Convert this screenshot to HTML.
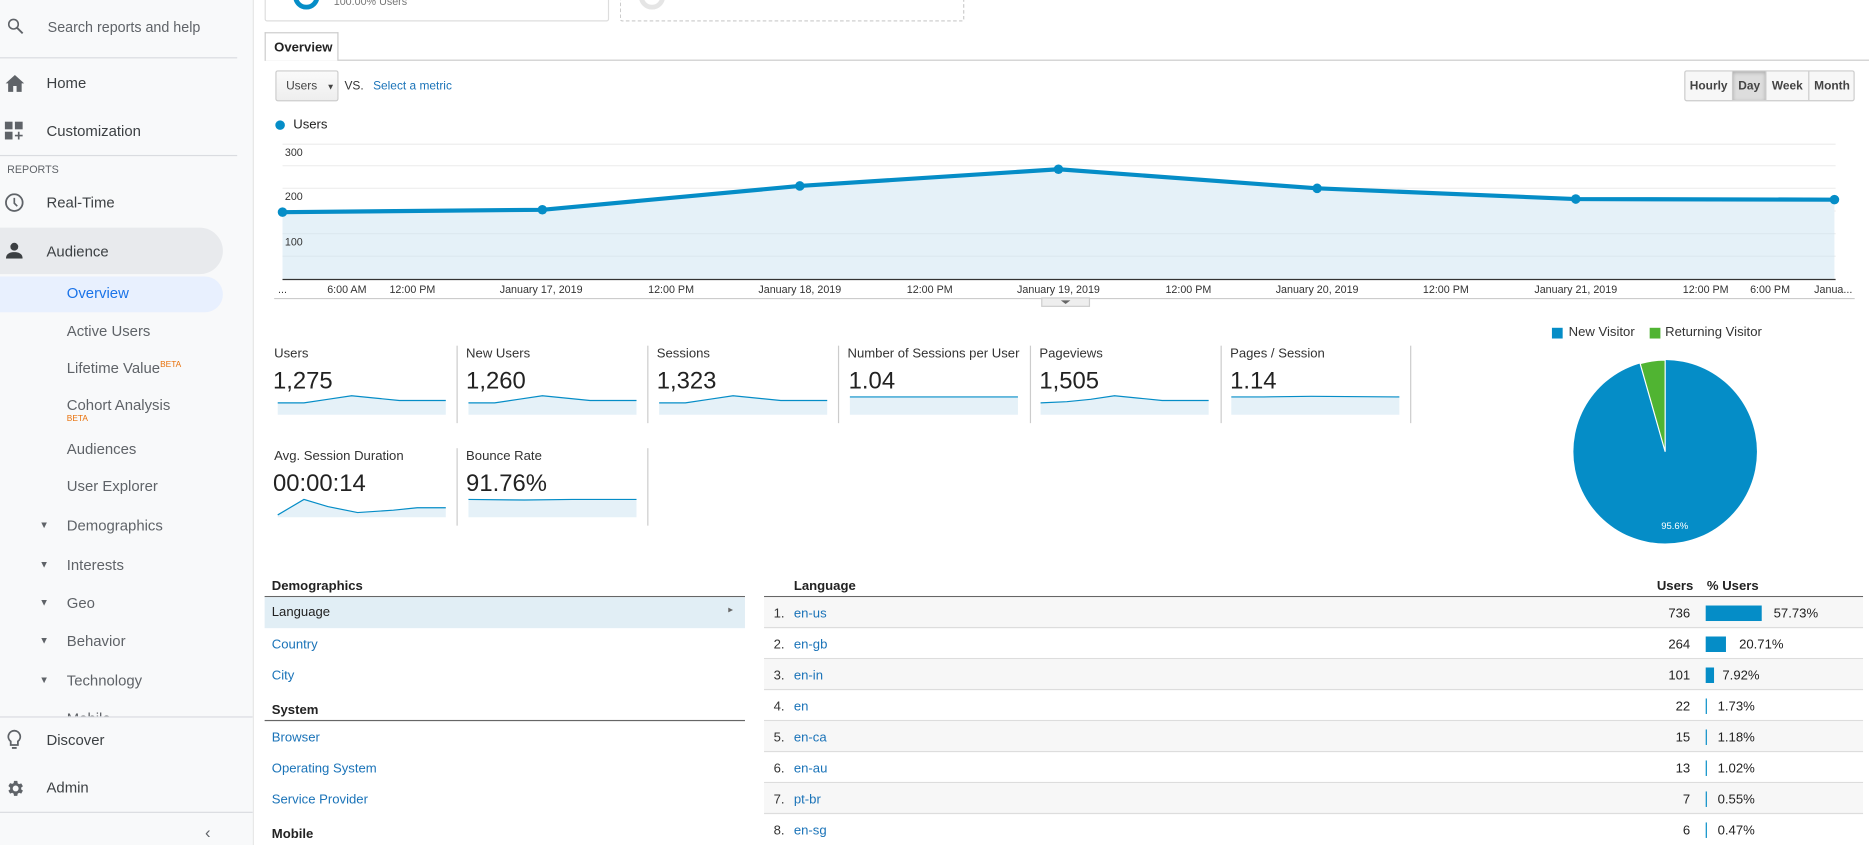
<!DOCTYPE html>
<html><head><meta charset="utf-8"><style>
*{box-sizing:border-box;margin:0;padding:0}
html,body{width:1869px;height:845px;overflow:hidden;background:#fff;font-family:"Liberation Sans",Arial,sans-serif}
#w{position:absolute;left:0;top:0;width:1568px;height:709px;transform:scale(1.19196);transform-origin:0 0;overflow:hidden}
.a{position:absolute;white-space:nowrap}
#sb{position:absolute;left:0;top:0;width:213px;height:709px;background:#f8f9fa;border-right:1px solid #e6e6e6;overflow:hidden}
.sbt{position:absolute;font-size:12.5px;color:#3c4043}
.sub{position:absolute;left:56px;font-size:12.5px;color:#5f6368}
.hr{position:absolute;left:0;width:199px;height:1px;background:#dadce0}
.lbl{font-size:11px;color:#333}
.val{font-size:20px;color:#222}
.sep{position:absolute;width:1px;background:#ccc}
.lnk{color:#1a73b8}
.row{position:absolute;left:641px;width:922px;height:26px;border-bottom:1px solid #ddd;font-size:11px}
.row span{position:absolute;top:8px}
</style></head><body><div id="w">
<div id="sb">
 <svg class="a" style="left:5px;top:14px" width="16" height="16" viewBox="0 0 24 24"><circle cx="9.5" cy="9.5" r="6" fill="none" stroke="#5f6368" stroke-width="2"/><path d="M14 14l7 7" stroke="#5f6368" stroke-width="2.4"/></svg>
 <div class="sbt" style="left:40px;top:16px;font-size:12px;color:#5f6368">Search reports and help</div>
 <div class="hr" style="top:48px"></div>
 <svg class="a" style="left:4px;top:62px" width="17" height="16" viewBox="0 0 24 22"><path d="M12 1L1 11h3v10h6v-7h4v7h6V11h3z" fill="#5f6368"/></svg>
 <div class="sbt" style="left:39px;top:63px">Home</div>
 <svg class="a" style="left:4px;top:102px" width="16" height="16" viewBox="0 0 16 16"><rect x="0" y="0" width="6.5" height="6.5" fill="#5f6368"/><rect x="8.5" y="0" width="6.5" height="6.5" fill="#5f6368"/><rect x="0" y="8.5" width="6.5" height="6.5" fill="#5f6368"/><path d="M11.7 8.5v6.5M8.5 11.7h6.5" stroke="#5f6368" stroke-width="1.4"/></svg>
 <div class="sbt" style="left:39px;top:103px">Customization</div>
 <div class="hr" style="top:130px"></div>
 <div class="a" style="left:6px;top:137px;font-size:9px;color:#5f6368">REPORTS</div>
 <svg class="a" style="left:4px;top:162px" width="16" height="16" viewBox="0 0 16 16"><circle cx="8" cy="8" r="7" fill="none" stroke="#5f6368" stroke-width="1.5"/><path d="M8 4v4.5l2.5 2.5" fill="none" stroke="#5f6368" stroke-width="1.4"/></svg>
 <div class="sbt" style="left:39px;top:163px">Real-Time</div>
 <div class="a" style="left:0;top:191px;width:187px;height:39px;background:#e8eaed;border-radius:0 20px 20px 0"></div>
 <svg class="a" style="left:5px;top:203px" width="14" height="14" viewBox="0 0 14 14"><circle cx="7" cy="4" r="3.3" fill="#3c4043"/><path d="M0 14c0-4 3-5.5 7-5.5s7 1.5 7 5.5z" fill="#3c4043"/></svg>
 <div class="sbt" style="left:39px;top:204px">Audience</div>
 <div class="a" style="left:0;top:232px;width:187px;height:30px;background:#e8f0fe;border-radius:0 15px 15px 0"></div>
 <div class="sub" style="top:239px;color:#1a73e8">Overview</div>
 <div class="sub" style="top:271px">Active Users</div>
 <div class="sub" style="top:302px">Lifetime Value<sup style="font-size:7px;color:#e8710a">BETA</sup></div>
 <div class="sub" style="top:333px">Cohort Analysis</div>
 <div class="a" style="left:56px;top:348px;font-size:7px;color:#e8710a">BETA</div>
 <div class="sub" style="top:370px">Audiences</div>
 <div class="sub" style="top:401px">User Explorer</div>
 <div class="sub" style="left:33px;top:436px;font-size:8px">▼</div><div class="sub" style="top:434px">Demographics</div>
 <div class="sub" style="left:33px;top:469px;font-size:8px">▼</div><div class="sub" style="top:467px">Interests</div>
 <div class="sub" style="left:33px;top:501px;font-size:8px">▼</div><div class="sub" style="top:499px">Geo</div>
 <div class="sub" style="left:33px;top:533px;font-size:8px">▼</div><div class="sub" style="top:531px">Behavior</div>
 <div class="sub" style="left:33px;top:566px;font-size:8px">▼</div><div class="sub" style="top:564px">Technology</div>
 <div class="sub" style="top:596px">Mobile</div>
 <div class="a" style="left:0;top:601px;width:213px;height:108px;background:#f8f9fa"></div>
 <div class="hr" style="top:601px;width:213px"></div>
 <svg class="a" style="left:6px;top:612px" width="12" height="17" viewBox="0 0 12 17"><path d="M6 1a5 5 0 0 0-3 9v3h6v-3a5 5 0 0 0-3-9z" fill="none" stroke="#5f6368" stroke-width="1.5"/><path d="M4 15.5h4" stroke="#5f6368" stroke-width="1.5"/></svg>
 <div class="sbt" style="left:39px;top:614px">Discover</div>
 <svg class="a" style="left:4px;top:653px" width="17" height="17" viewBox="0 0 24 24"><path d="M19.4 13a7.5 7.5 0 0 0 0-2l2.1-1.6-2-3.5-2.5 1a7 7 0 0 0-1.7-1L14.9 3h-4l-.4 2.6a7 7 0 0 0-1.7 1l-2.5-1-2 3.5L6.4 11a7.5 7.5 0 0 0 0 2l-2.1 1.6 2 3.5 2.5-1a7 7 0 0 0 1.7 1l.4 2.6h4l.4-2.6a7 7 0 0 0 1.7-1l2.5 1 2-3.5zM12.9 15.5a3.5 3.5 0 1 1 0-7 3.5 3.5 0 0 1 0 7z" fill="#5f6368"/></svg>
 <div class="sbt" style="left:39px;top:654px">Admin</div>
 <div class="hr" style="top:681px;width:213px"></div>
 <div class="a" style="left:172px;top:690px;font-size:14px;color:#5f6368">‹</div>
</div>

<div class="a" style="left:222px;top:-10px;width:289px;height:28px;border:1px solid #ddd;border-radius:2px"></div>
<div class="a" style="left:246px;top:-14px;width:22px;height:22px;border:4px solid #058dc7;border-radius:50%"></div>
<div class="a" style="left:280px;top:-4px;font-size:9px;color:#777">100.00% Users</div>
<div class="a" style="left:520px;top:-10px;width:289px;height:28px;border:1px dashed #ccc;border-radius:2px"></div>
<div class="a" style="left:536px;top:-14px;width:22px;height:22px;border:4px solid #e5e5e5;border-radius:50%"></div>

<div class="a" style="left:222px;top:50px;width:1346px;height:1px;background:#ccc"></div>
<div class="a" style="left:222px;top:27px;width:62px;height:24px;border:1px solid #ccc;border-bottom:none;background:#fff;font-size:11px;font-weight:bold;color:#222;padding:6px 0 0 7px">Overview</div>

<div class="a" style="left:231px;top:59px;width:53px;height:26px;border:1px solid #ccc;border-radius:2px;background:linear-gradient(#fafafa,#eee);font-size:10px;color:#444;padding:7px 0 0 8px">Users <span style="font-size:7px;margin-left:5px">▼</span></div>
<div class="a" style="left:289px;top:67px;font-size:10px;color:#333">VS.</div>
<div class="a lnk" style="left:313px;top:67px;font-size:10px">Select a metric</div>

<div class="a" style="left:1413px;top:59px;width:143px;height:26px;border:1px solid #ccc;border-radius:2px;background:#f7f7f7;font-size:10px;font-weight:bold;color:#444">
 <span class="a" style="left:0;top:0;width:40px;height:24px;padding-top:7px;text-align:center;border-right:1px solid #ccc">Hourly</span>
 <span class="a" style="left:40px;top:0;width:28px;height:24px;padding-top:7px;text-align:center;background:#ddd;border-right:1px solid #ccc;box-shadow:inset 0 1px 3px #aaa">Day</span>
 <span class="a" style="left:68px;top:0;width:36px;height:24px;padding-top:7px;text-align:center;border-right:1px solid #ccc">Week</span>
 <span class="a" style="left:104px;top:0;width:38px;height:24px;padding-top:7px;text-align:center">Month</span>
</div>

<div class="a" style="left:231px;top:101px;width:8px;height:8px;border-radius:50%;background:#058dc7"></div>
<div class="a" style="left:246px;top:99px;font-size:11px;color:#222">Users</div>

<svg class="a" style="left:0;top:0" width="1568" height="260">
 <g stroke="#eee" stroke-width="1"><line x1="237" y1="121" x2="1540" y2="121"/><line x1="237" y1="139" x2="1540" y2="139"/><line x1="237" y1="158" x2="1540" y2="158"/><line x1="237" y1="177" x2="1540" y2="177"/><line x1="237" y1="196" x2="1540" y2="196"/><line x1="237" y1="215" x2="1540" y2="215"/></g>
 <path d="M237 178L455 176L671 156L888 142L1105 158L1322 167L1539 167.5L1539 234L237 234Z" fill="#e5f1f8"/>
 <g stroke="#dde9f0"><line x1="237" y1="196" x2="1539" y2="196"/><line x1="237" y1="215" x2="1539" y2="215"/></g>
 <path d="M237 178L455 176L671 156L888 142L1105 158L1322 167L1539 167.5" fill="none" stroke="#058dc7" stroke-width="3.5"/>
 <g fill="#058dc7"><circle cx="237" cy="178" r="4"/><circle cx="455" cy="176" r="4"/><circle cx="671" cy="156" r="4"/><circle cx="888" cy="142" r="4"/><circle cx="1105" cy="158" r="4"/><circle cx="1322" cy="167" r="4"/><circle cx="1539" cy="167.5" r="4"/></g>
 <line x1="237" y1="234.5" x2="1540" y2="234.5" stroke="#333" stroke-width="1"/>
 <line x1="230" y1="250.5" x2="1556" y2="250.5" stroke="#ccc"/>
 <rect x="874" y="250" width="40" height="7" fill="#eee" stroke="#ccc"/>
 <path d="M890 252h8l-4 3z" fill="#666"/>
 <g font-family="Liberation Sans,Arial" font-size="9" fill="#333">
  <text x="239" y="131">300</text><text x="239" y="168">200</text><text x="239" y="206">100</text>
 </g>
 <g font-family="Liberation Sans,Arial" font-size="9" fill="#333" text-anchor="middle">
  <text x="237" y="246">...</text><text x="291" y="246">6:00 AM</text><text x="346" y="246">12:00 PM</text><text x="454" y="246">January 17, 2019</text><text x="563" y="246">12:00 PM</text><text x="671" y="246">January 18, 2019</text><text x="780" y="246">12:00 PM</text><text x="888" y="246">January 19, 2019</text><text x="997" y="246">12:00 PM</text><text x="1105" y="246">January 20, 2019</text><text x="1213" y="246">12:00 PM</text><text x="1322" y="246">January 21, 2019</text><text x="1431" y="246">12:00 PM</text><text x="1485" y="246">6:00 PM</text><text x="1538" y="246">Janua...</text>
 </g>
</svg>

<div class="sep" style="left:383px;top:290px;height:65px"></div><div class="sep" style="left:543px;top:290px;height:65px"></div><div class="sep" style="left:703px;top:290px;height:65px"></div><div class="sep" style="left:864px;top:290px;height:65px"></div><div class="sep" style="left:1024px;top:290px;height:65px"></div><div class="sep" style="left:1183px;top:290px;height:65px"></div>
<div class="sep" style="left:383px;top:376px;height:65px"></div><div class="sep" style="left:543px;top:376px;height:65px"></div>

<div class="a lbl" style="left:230px;top:291px">Users</div><div class="a val" style="left:229px;top:309px">1,275</div>
<div class="a lbl" style="left:391px;top:291px">New Users</div><div class="a val" style="left:391px;top:309px">1,260</div>
<div class="a lbl" style="left:551px;top:291px">Sessions</div><div class="a val" style="left:551px;top:309px">1,323</div>
<div class="a lbl" style="left:711px;top:291px">Number of Sessions per User</div><div class="a val" style="left:712px;top:309px">1.04</div>
<div class="a lbl" style="left:872px;top:291px">Pageviews</div><div class="a val" style="left:872px;top:309px">1,505</div>
<div class="a lbl" style="left:1032px;top:291px">Pages / Session</div><div class="a val" style="left:1032px;top:309px">1.14</div>
<div class="a lbl" style="left:230px;top:377px">Avg. Session Duration</div><div class="a val" style="left:229px;top:395px">00:00:14</div>
<div class="a lbl" style="left:391px;top:377px">Bounce Rate</div><div class="a val" style="left:391px;top:395px">91.76%</div>

<svg class="a" style="left:0;top:0" width="1200" height="450">
 <g fill="#e5f1f8" stroke="none">
  <path d="M233 338L255 338L275 335L295 332L315 334L335 336L374 336V348H233Z"/>
  <path d="M393 338L415 338L435 335L455 332L475 334L495 336L534 336V348H393Z"/>
  <path d="M553 338L575 338L595 335L615 332L635 334L655 336L694 336V348H553Z"/>
  <path d="M713 333L854 333V348H713Z"/>
  <path d="M873 338L895 337L915 335L935 332L955 334L975 336L1014 336V348H873Z"/>
  <path d="M1033 333L1060 333L1100 332.5L1174 333V348H1033Z"/>
  <path d="M233 432L255 419L275 425L300 430L330 428L350 426L374 426V434H233Z"/>
  <path d="M393 419L440 419.5L480 419L534 419V434H393Z"/>
 </g>
 <g fill="none" stroke="#058dc7" stroke-width="1">
  <path d="M233 338L255 338L275 335L295 332L315 334L335 336L374 336"/>
  <path d="M393 338L415 338L435 335L455 332L475 334L495 336L534 336"/>
  <path d="M553 338L575 338L595 335L615 332L635 334L655 336L694 336"/>
  <path d="M713 333L854 333"/>
  <path d="M873 338L895 337L915 335L935 332L955 334L975 336L1014 336"/>
  <path d="M1033 333L1060 333L1100 332.5L1174 333"/>
  <path d="M233 432L255 419L275 425L300 430L330 428L350 426L374 426"/>
  <path d="M393 419L440 419.5L480 419L534 419"/>
 </g>
</svg>

<div class="a" style="left:1302px;top:275px;width:9px;height:9px;background:#058dc7"></div>
<div class="a" style="left:1316px;top:273px;font-size:11px;color:#333">New Visitor</div>
<div class="a" style="left:1384px;top:275px;width:9px;height:9px;background:#50b432"></div>
<div class="a" style="left:1397px;top:273px;font-size:11px;color:#333">Returning Visitor</div>
<svg class="a" style="left:1318px;top:300px" width="160" height="160">
 <circle cx="79" cy="79" r="77" fill="#058dc7"/>
 <path d="M79 79L79 2A77 77 0 0 0 58 5Z" fill="#50b432" stroke="#fff" stroke-width="1"/>
 <text x="87" y="144" font-family="Liberation Sans,Arial" font-size="8" fill="#fff" text-anchor="middle">95.6%</text>
</svg>

<div class="a" style="left:228px;top:486px;font-size:11px;font-weight:bold;color:#222">Demographics</div>
<div class="a" style="left:222px;top:500px;width:403px;height:1px;background:#666"></div>
<div class="a" style="left:222px;top:501px;width:403px;height:26px;background:#e1eef5"></div>
<div class="a" style="left:228px;top:508px;font-size:11px;color:#222">Language</div>
<div class="a" style="left:611px;top:507px;font-size:8px;color:#666">▸</div>
<div class="a lnk" style="left:228px;top:535px;font-size:11px">Country</div>
<div class="a lnk" style="left:228px;top:561px;font-size:11px">City</div>
<div class="a" style="left:228px;top:590px;font-size:11px;font-weight:bold;color:#222">System</div>
<div class="a" style="left:222px;top:604px;width:403px;height:1px;background:#666"></div>
<div class="a lnk" style="left:228px;top:613px;font-size:11px">Browser</div>
<div class="a lnk" style="left:228px;top:639px;font-size:11px">Operating System</div>
<div class="a lnk" style="left:228px;top:665px;font-size:11px">Service Provider</div>
<div class="a" style="left:228px;top:694px;font-size:11px;font-weight:bold;color:#222">Mobile</div>

<div class="a" style="left:666px;top:486px;font-size:11px;font-weight:bold;color:#222">Language</div>
<div class="a" style="left:1390px;top:486px;font-size:11px;font-weight:bold;color:#222">Users</div>
<div class="a" style="left:1432px;top:486px;font-size:11px;font-weight:bold;color:#222">% Users</div>
<div class="a" style="left:641px;top:500px;width:922px;height:1px;background:#666"></div>

<div class="row" style="top:501px;background:#f7f7f7"><span style="left:8px;color:#333">1.</span><span class="lnk" style="left:25px">en-us</span><span style="right:145px;color:#222">736</span><i class="a" style="left:790px;top:7px;width:47px;height:13px;background:#058dc7"></i><span style="left:847px;color:#222">57.73%</span></div>
<div class="row" style="top:527px"><span style="left:8px;color:#333">2.</span><span class="lnk" style="left:25px">en-gb</span><span style="right:145px;color:#222">264</span><i class="a" style="left:790px;top:7px;width:17px;height:13px;background:#058dc7"></i><span style="left:818px;color:#222">20.71%</span></div>
<div class="row" style="top:553px;background:#f7f7f7"><span style="left:8px;color:#333">3.</span><span class="lnk" style="left:25px">en-in</span><span style="right:145px;color:#222">101</span><i class="a" style="left:790px;top:7px;width:7px;height:13px;background:#058dc7"></i><span style="left:804px;color:#222">7.92%</span></div>
<div class="row" style="top:579px"><span style="left:8px;color:#333">4.</span><span class="lnk" style="left:25px">en</span><span style="right:145px;color:#222">22</span><i class="a" style="left:790px;top:7px;width:1px;height:13px;background:#058dc7"></i><span style="left:800px;color:#222">1.73%</span></div>
<div class="row" style="top:605px;background:#f7f7f7"><span style="left:8px;color:#333">5.</span><span class="lnk" style="left:25px">en-ca</span><span style="right:145px;color:#222">15</span><i class="a" style="left:790px;top:7px;width:1px;height:13px;background:#058dc7"></i><span style="left:800px;color:#222">1.18%</span></div>
<div class="row" style="top:631px"><span style="left:8px;color:#333">6.</span><span class="lnk" style="left:25px">en-au</span><span style="right:145px;color:#222">13</span><i class="a" style="left:790px;top:7px;width:1px;height:13px;background:#058dc7"></i><span style="left:800px;color:#222">1.02%</span></div>
<div class="row" style="top:657px;background:#f7f7f7"><span style="left:8px;color:#333">7.</span><span class="lnk" style="left:25px">pt-br</span><span style="right:145px;color:#222">7</span><i class="a" style="left:790px;top:7px;width:1px;height:13px;background:#058dc7"></i><span style="left:800px;color:#222">0.55%</span></div>
<div class="row" style="top:683px;border:none"><span style="left:8px;color:#333">8.</span><span class="lnk" style="left:25px">en-sg</span><span style="right:145px;color:#222">6</span><i class="a" style="left:790px;top:7px;width:1px;height:13px;background:#058dc7"></i><span style="left:800px;color:#222">0.47%</span></div>
</div></body></html>
